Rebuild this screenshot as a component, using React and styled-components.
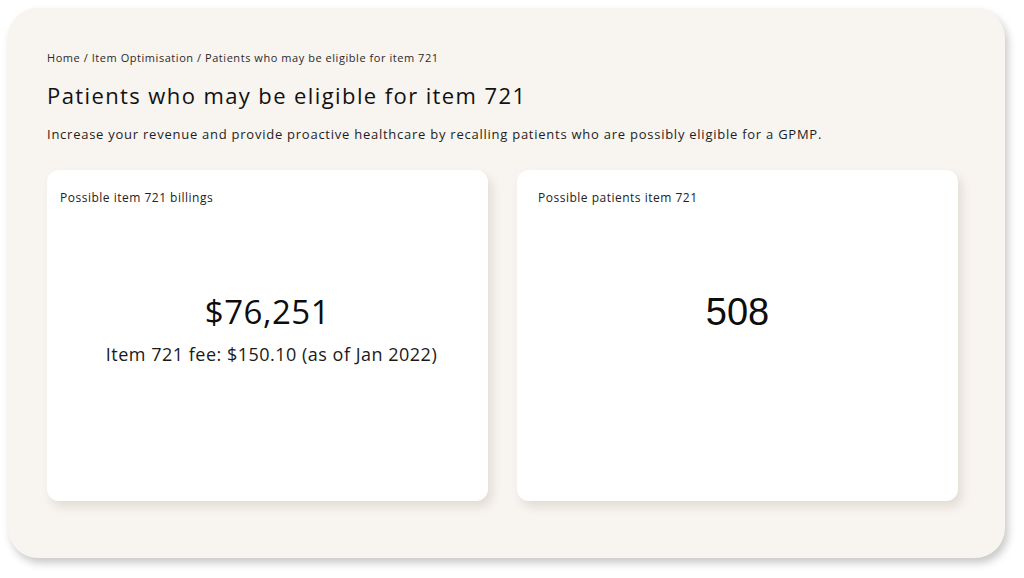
import React from "react";
import styled, { createGlobalStyle } from "styled-components";

const GlobalStyle = createGlobalStyle`
  * { box-sizing: border-box; }
  body {
    margin: 0;
    background: #ffffff;
    font-family: "Open Sans", "DejaVu Sans", sans-serif;
    color: #1b1b1b;
  }
`;

const Page = styled.div`
  width: 1024px;
  height: 578px;
  padding: 8px 19px 20px 8px;
`;

const Panel = styled.main`
  height: 550px;
  background: #f8f4f0;
  border-radius: 30px;
  box-shadow: 3px 5px 8px rgba(0, 0, 0, 0.22);
  padding: 42px 47px 0 39px;
`;

const Breadcrumb = styled.nav`
  font-size: 11px;
  color: #2a2a2a;
  letter-spacing: 0.55px;
  line-height: 16px;
`;

const Title = styled.h1`
  margin: 14px 0 0;
  font-size: 22px;
  font-weight: 400;
  letter-spacing: 1.4px;
  line-height: 30px;
  color: #111;
`;

const Intro = styled.p`
  margin: 15px 0 0;
  font-size: 13px;
  letter-spacing: 0.75px;
  line-height: 18px;
  color: #1e1e1e;
`;

const Cards = styled.section`
  margin-top: 27px;
  display: grid;
  grid-template-columns: 441px 441px;
  gap: 29px;
`;

const Card = styled.div`
  height: 331px;
  background: #ffffff;
  border-radius: 12px;
  box-shadow: 4px 6px 10px rgba(120, 100, 80, 0.16);
  padding: 20px ${(p) => p.$inset}px;
  display: flex;
  flex-direction: column;
`;

const Label = styled.div`
  font-size: 12px;
  letter-spacing: 0.5px;
  line-height: 16px;
  color: #222;
`;

const Body = styled.div`
  margin-top: 84px;
  display: flex;
  flex-direction: column;
  align-items: center;
`;

const Value = styled.div`
  font-size: ${(p) => (p.$plain ? 38 : 33)}px;
  font-family: ${(p) =>
    p.$plain ? '"Liberation Sans", Arial, sans-serif' : "inherit"};
  font-weight: ${(p) => (p.$plain ? 400 : 500)};
  letter-spacing: ${(p) => (p.$plain ? 0 : 0.5)}px;
  line-height: 44px;
  color: #0d0d0d;
`;

const Note = styled.div`
  margin-top: 7px;
  padding-left: 8px;
  font-size: 18px;
  letter-spacing: 0.5px;
  line-height: 26px;
  color: #1a1a1a;
`;

export default function App() {
  return (
    <>
      <GlobalStyle />
      <Page>
        <Panel>
          <Breadcrumb>
            Home / Item Optimisation / Patients who may be eligible for item 721
          </Breadcrumb>
          <Title>Patients who may be eligible for item 721</Title>
          <Intro>
            Increase your revenue and provide proactive healthcare by recalling
            patients who are possibly eligible for a GPMP.
          </Intro>
          <Cards>
            <Card $inset={13}>
              <Label>Possible item 721 billings</Label>
              <Body>
                <Value>$76,251</Value>
                <Note>Item 721 fee: $150.10 (as of Jan 2022)</Note>
              </Body>
            </Card>
            <Card $inset={21}>
              <Label>Possible patients item 721</Label>
              <Body>
                <Value $plain>508</Value>
              </Body>
            </Card>
          </Cards>
        </Panel>
      </Page>
    </>
  );
}
